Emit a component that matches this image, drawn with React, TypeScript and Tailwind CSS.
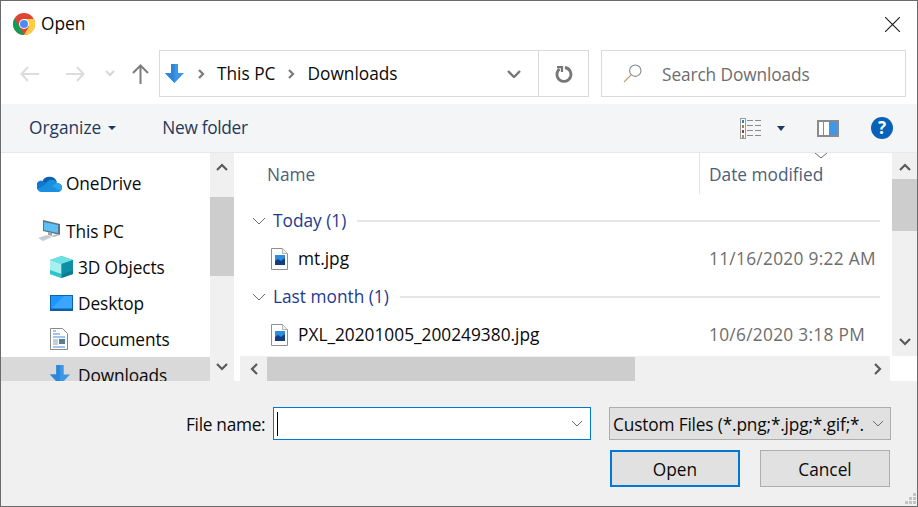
const Chev = ({ className, d = "M1 1l6 6 6-6", w = 14, h = 8, stroke = "#6b6b6b", sw = 1 }: any) => (
  <svg width={w} height={h} viewBox={`0 0 ${w} ${h}`} className={className} fill="none" stroke={stroke} strokeWidth={sw}><path d={d} /></svg>
);

const Arrow = ({ color, flip }: { color: string; flip?: boolean }) => (
  <svg width="19" height="16" viewBox="0 0 19 16" fill="none" stroke={color} strokeWidth="2" style={flip ? { transform: "scaleX(-1)" } : undefined}>
    <path d="M1 8h18M8 1L1.500 8 8 15" />
  </svg>
);

const BlueDown = ({ size = 19 }: { size?: number }) => (
  <svg width={size} height={size} viewBox="0 0 19 19"><path d="M6 0h7v9h6l-9.500 10L0 9h6z" fill="#3c97e8" /><path d="M6 0h3.500v19L0 9h6z" fill="#2f86d8" /></svg>
);

const Chrome = () => (
  <svg width="22" height="22" viewBox="0 0 22 22">
    <circle cx="11" cy="11" r="11" fill="#db4437" />
    <path d="M1.500 5.500L6.500 14l4.500 8A11 11 0 0 1 1.500 5.500z" fill="#0f9d58" />
    <path d="M11 6h10a11 11 0 0 1-10 16l5-8.500z" fill="#ffcd40" />
    <circle cx="11" cy="11" r="5" fill="#fff" />
    <circle cx="11" cy="11" r="4" fill="#4c8bf5" />
  </svg>
);

const OneDrive = () => (
  <svg width="25" height="17" viewBox="0 0 25 17">
    <path d="M5 7a8 8 0 0 1 15 0l-9 6z" fill="#0a5fb0" />
    <path d="M4 5.500a5.500 5.500 0 0 0-3.500 9L9 11l1-3z" fill="#0f78d4" />
    <path d="M9 9a6 6 0 0 1 11-1c2.500 0 4.500 1.500 5 4 .2 1.500-.3 3-1.500 4a3 3 0 0 1-2 1H4a4 4 0 0 1-3.500-2.500z" fill="#1a8fe0" />
    <path d="M20 8c2.500 0 4.500 1.500 5 4 .2 1.500-.3 3-1.500 4L15 11z" fill="#2aa5ea" />
  </svg>
);

const PC = () => (
  <svg width="24" height="22" viewBox="0 0 24 22">
    <path d="M6 0l17 4v11L6 11z" fill="#5c7385" />
    <path d="M7 2l14 3v8L7 10z" fill="#5cc0f5" />
    <path d="M1 18l9-3 5 2-9 4z" fill="#c6ccd0" />
    <path d="M14 16l6-2 3 1-6 2z" fill="#b5bcc2" />
    <path d="M11 12l4 1v3l-4-1z" fill="#9aa5ad" />
  </svg>
);

const Cube = () => (
  <svg width="23" height="22" viewBox="0 0 23 22">
    <path d="M11.500 0L23 4v14l-11.500 4L0 18V4z" fill="#22b8c8" />
    <path d="M0 4l11.500 4L23 4 11.500 0z" fill="#6fe0e4" />
    <path d="M0 4l11.500 4v14L0 18z" fill="#a8f0ee" />
    <path d="M0 14l11.500 4v4L0 18z" fill="#2cc5cc" />
    <path d="M11.500 8L23 4v10l-11.500 4z" fill="#0e8fa5" />
    <path d="M11.500 18L23 14v4l-11.500 4z" fill="#0e7c90" />
  </svg>
);

const DesktopIcon = () => (
  <svg width="23" height="16" viewBox="0 0 23 16">
    <rect x="0.500" y="0.500" width="22" height="15" fill="#1c97ff" stroke="#0b63b0" />
    <path d="M1 14L14 1h8v13z" fill="#3aa6ff" />
    <rect x="1" y="13.500" width="21" height="2" fill="#0b5fa8" />
  </svg>
);

const DocIcon = () => (
  <svg width="18" height="22" viewBox="0 0 18 22">
    <path d="M.5.500h12l5 5v16H.5z" fill="#fff" stroke="#8a8a8a" />
    <path d="M3 3h3M3 6h7M3 9h12M3 19h12" stroke="#3c8fe0" strokeWidth="1" />
    <path d="M3 12h5M3 14h5M3 16h5" stroke="#9a9a9a" />
    <rect x="9" y="11" width="6" height="5" fill="#5a7d90" />
  </svg>
);

const ImgFile = () => (
  <svg width="17" height="22" viewBox="0 0 17 22">
    <path d="M.5.500h11l5 5v16H.5z" fill="#fff" stroke="#8f8f8f" />
    <path d="M11.500.500v5h5" fill="#eee" stroke="#b5b5b5" />
    <rect x="4" y="7" width="10" height="10" fill="#2c8ddb" />
    <path d="M4 17v-4l3-2 3 2 4-3v7z" fill="#123d82" />
  </svg>
);

const ScrollBtn = ({ d }: { d: string }) => (
  <svg width="12" height="10" viewBox="0 0 12 10" fill="none" stroke="#5a5a5a" strokeWidth="2.200"><path d={d} /></svg>
);

const UP = "M1 8l5-5 5 5";
const DOWN = "M1 2l5 5 5-5";

const NavRow = ({ icon, label, indent, className = "" }: any) => (
  <div className={`h-[36px] shrink-0 flex items-center ${className}`}>
    <div className={`${indent ? "w-[77px] pl-[49px]" : "w-[65px] pl-[36px]"} shrink-0 flex`}>{icon}</div>
    <span className="text-[#0a0a0a] whitespace-nowrap mt-[2px] tracking-[-0.1px]">{label}</span>
  </div>
);

const Group = ({ label }: { label: string }) => (
  <div className="h-[38px] flex items-center">
    <Chev className="ml-[12px] mr-[7px]" />
    <span className="text-[#1e3a8f] whitespace-nowrap">{label}</span>
    <div className="flex-1 h-[2px] bg-[#e5e5e5] ml-[11px] mr-[11px]" />
  </div>
);

const FileRow = ({ name, date }: { name: string; date: string }) => (
  <div className="h-[38px] flex items-center">
    <div className="ml-[31px] mr-[10px] shrink-0 flex"><ImgFile /></div>
    <span className="flex-1 text-[#0a0a0a]">{name}</span>
    <span className="w-[182px] shrink-0 text-[#6d6d6d] whitespace-nowrap tracking-[0.3px]">{date}</span>
  </div>
);

export default function App() {
  return (
    <div className="w-[918px] h-[507px] bg-white overflow-hidden font-['Open_Sans',sans-serif] text-[17.3px] leading-[24px]">
      <div className="relative w-[918px] h-[507px] flex flex-col border border-[#6a6a6a] bg-white">
        <div className="h-[46px] flex items-center shrink-0 pl-[12px]">
          <Chrome />
          <span className="ml-[6px] text-[#0a0a0a]">Open</span>
          <svg className="ml-auto mr-[17px]" width="15" height="15" viewBox="0 0 15 15" stroke="#1a1a1a" fill="none" strokeWidth="1.100"><path d="M0 0l15 15M15 0L0 15" /></svg>
        </div>

        <div className="h-[57px] shrink-0 flex pt-[3px] pb-[7px] pr-[11px]">
          <div className="w-[158px] shrink-0 flex items-center pl-[19px]">
            <Arrow color="#dcdcdc" />
            <span className="w-[27px]" />
            <Arrow color="#dcdcdc" flip />
            <Chev className="ml-[20px] mr-[17px]" d="M1 1l4 4 4-4" w={10} h={7} stroke="#d6d6d6" sw={2} />
            <svg width="17" height="20" viewBox="0 0 17 20" fill="none" stroke="#7d7d7d" strokeWidth="2"><path d="M8.500 20V2M1 9l7.500-7.500L16 9" /></svg>
          </div>
          <div className="w-[430px] shrink-0 flex items-center border border-[#d9d9d9]">
            <div className="ml-[5px] flex"><BlueDown /></div>
            <Chev className="ml-[14px] mr-[12px]" d="M1 1l4 4-4 4" w={7} h={10} stroke="#7a7a7a" sw={2.2} />
            <span className="text-[#0a0a0a]">This PC</span>
            <Chev className="ml-[12px] mr-[13px]" d="M1 1l4 4-4 4" w={7} h={10} stroke="#7a7a7a" sw={2.2} />
            <span className="text-[#0a0a0a]">Downloads</span>
            <Chev className="ml-auto mr-[17px]" d="M1 1l6 6 6-6" w={14} h={8} stroke="#777" sw={2.4} />
            <div className="w-[50px] h-full border-l border-[#d9d9d9] flex items-center justify-center">
              <svg width="18" height="18" viewBox="0 0 18 18" fill="none" stroke="#777" strokeWidth="2.800"><path d="M10 2.500A7 7 0 1 1 4.500 4" /><path d="M2 2.200h5V7" strokeWidth="2.200" /></svg>
            </div>
          </div>
          <div className="ml-[12px] flex-1 flex items-center border border-[#d9d9d9]">
            <svg className="ml-[21px]" width="19" height="19" viewBox="0 0 19 19" fill="none" stroke="#7f8a96" strokeWidth="1.100"><circle cx="12.300" cy="6.700" r="5.700" /><path d="M8 11L1 18" stroke="#c59a6b" /></svg>
            <span className="ml-[20px] mt-[2px] text-[#6d6d6d] tracking-[-0.1px]">Search Downloads</span>
          </div>
        </div>

        <div className="h-[49px] shrink-0 flex items-center bg-[#f4f5f7] border-b border-[#e6e8ec] pl-[28px] text-[#1e395b]">
          <span>Organize</span>
          <svg className="ml-[7px]" width="8" height="4" viewBox="0 0 8 4"><path d="M0 0h8L4 4z" fill="#1e395b" /></svg>
          <span className="ml-[46px] tracking-[-0.3px]">New folder</span>
          <svg className="ml-auto" width="22" height="21" viewBox="0 0 22 21">
            <rect x=".5" y=".5" width="5" height="20" fill="#fff" stroke="#9a9a9a" />
            <rect x="2" y="2" width="2" height="3" fill="#2e7eb8" />
            <rect x="2" y="7" width="2" height="3" fill="#9a8a3a" />
            <rect x="2" y="12" width="2" height="3" fill="#b03030" />
            <rect x="2" y="17" width="2" height="3" fill="#8fa05a" />
            <path d="M7 2.500h6M15 2.500h6M7 7.500h6M15 7.500h6M7 12.500h6M15 12.500h6M7 17.500h6M15 17.500h6" stroke="#8a8a8a" />
          </svg>
          <svg className="ml-[15px]" width="8" height="5" viewBox="0 0 8 5"><path d="M0 0h8L4 5z" fill="#1e395b" /></svg>
          <svg className="ml-[32px]" width="22" height="17" viewBox="0 0 22 17">
            <rect x="1" y="1" width="20" height="15" fill="#fff" stroke="#8a8a8a" strokeWidth="2" />
            <path d="M6.500 1v15" stroke="#8a8a8a" />
            <rect x="12" y="2" width="8" height="13" fill="#3f97e6" />
          </svg>
          <div className="ml-[32px] mr-[24px] w-[22px] h-[22px] rounded-full bg-[#0a62b8] flex items-center justify-center text-white font-bold text-[17px] leading-[22px]">?</div>
        </div>

        <div className="h-[228px] shrink-0 flex overflow-hidden">
          <div className="w-[209px] shrink-0 flex flex-col pt-[12px] overflow-hidden">
            <NavRow icon={<OneDrive />} label="OneDrive" className="mb-[12px]" />
            <NavRow icon={<PC />} label="This PC" />
            <NavRow icon={<Cube />} label="3D Objects" indent />
            <NavRow icon={<DesktopIcon />} label="Desktop" indent />
            <NavRow icon={<DocIcon />} label="Documents" indent />
            <NavRow icon={<BlueDown size={20} />} label="Downloads" indent className="bg-[#d9d9d9]" />
          </div>
          <div className="w-[24px] shrink-0 flex flex-col bg-[#f0f0f0]">
            <div className="h-[44px] flex items-start pt-[9px] justify-center"><ScrollBtn d={UP} /></div>
            <div className="h-[79px] bg-[#cdcdcd]" />
            <div className="flex-1 flex items-end pb-[9px] justify-center"><ScrollBtn d={DOWN} /></div>
          </div>
          <div className="w-[6px] shrink-0 bg-white" />
          <div className="flex-1 flex flex-col min-w-0">
            <div className="flex-1 flex min-h-0">
              <div className="flex-1 flex flex-col min-w-0 overflow-hidden">
                <div className="relative h-[41px] shrink-0 flex text-[#4c607a]">
                  <span className="w-[459px] pl-[27px] pt-[10px] shrink-0">Name</span>
                  <div className="w-px h-[41px] bg-[#e5e5e5] shrink-0" />
                  <span className="pl-[9px] pt-[10px] whitespace-nowrap">Date modified</span>
                  <svg className="absolute left-[574px] top-0" width="14" height="6" viewBox="0 0 14 6" fill="none" stroke="#6b6b6b"><path d="M1 0l6 5 6-5" /></svg>
                </div>
                <div className="h-[8px] shrink-0" />
                <Group label="Today (1)" />
                <FileRow name="mt.jpg" date="11/16/2020 9:22 AM" />
                <Group label="Last month (1)" />
                <FileRow name="PXL_20201005_200249380.jpg" date="10/6/2020 3:18 PM" />
              </div>
              <div className="w-[25px] ml-[1px] shrink-0 flex flex-col bg-[#f0f0f0]">
                <div className="h-[26px] flex items-start pt-[9px] justify-center"><ScrollBtn d={UP} /></div>
                <div className="h-[52px] bg-[#cdcdcd]" />
                <div className="flex-1 flex items-end pb-[9px] justify-center"><ScrollBtn d={DOWN} /></div>
              </div>
            </div>
            <div className="h-[25px] shrink-0 flex">
              <div className="w-[650px] flex bg-[#f0f0f0] items-center">
                <div className="w-[27px] flex justify-center"><svg width="10" height="12" viewBox="0 0 10 12" fill="none" stroke="#5a5a5a" strokeWidth="2.200"><path d="M8 1L3 6l5 5" /></svg></div>
                <div className="w-[368px] h-[24px] bg-[#cdcdcd]" />
                <div className="flex-1 flex justify-end pr-[7px]"><svg width="10" height="12" viewBox="0 0 10 12" fill="none" stroke="#5a5a5a" strokeWidth="2.200"><path d="M2 1l5 5-5 5" /></svg></div>
              </div>
              <div className="flex-1 bg-white" />
            </div>
          </div>
        </div>

        <div className="relative flex-1 bg-[#f0f0f0] flex flex-col">
          <div className="flex pt-[26px]">
            <span className="ml-[185px] w-[87px] h-[33px] leading-[35px] text-[#0a0a0a] whitespace-nowrap tracking-[-0.3px]">File name:</span>
            <div className="w-[318px] h-[33px] bg-white border border-[#0078d7] flex items-center">
              <div className="ml-[3px] w-px h-[24px] bg-black" />
              <Chev className="ml-auto mr-[7px]" d="M1 1l5 5 5-5" w={12} h={7} />
            </div>
            <div className="ml-[18px] w-[282px] h-[33px] bg-[#e1e1e1] border border-[#adadad] flex items-center overflow-hidden">
              <span className="pl-[3px] w-[257px] shrink-0 mt-[2px] whitespace-nowrap text-[#0a0a0a] tracking-[-0.16px]">Custom Files (*.png;*.jpg;*.gif;*.</span>
              <Chev className="ml-[5px]" d="M1 1l5 5 5-5" w={12} h={7} />
            </div>
          </div>
          <div className="flex mt-[10px] ml-[609px] gap-[20px]">
            <button className="w-[130px] h-[37px] pt-[2px] bg-[#e1e1e1] border-2 border-[#0078d7] text-[#0a0a0a]">Open</button>
            <button className="w-[130px] h-[37px] pt-[2px] bg-[#e1e1e1] border border-[#adadad] text-[#0a0a0a]">Cancel</button>
          </div>
          <svg className="absolute right-[0px] bottom-[0px]" width="13" height="13" viewBox="0 0 13 13" fill="#c4c4c4">
            <rect x="9" y="0" width="3" height="3" /><rect x="5" y="4" width="3" height="3" /><rect x="9" y="4" width="3" height="3" /><rect x="1" y="8" width="3" height="3" /><rect x="5" y="8" width="3" height="3" /><rect x="9" y="8" width="3" height="3" />
          </svg>
        </div>
      </div>
    </div>
  );
}
